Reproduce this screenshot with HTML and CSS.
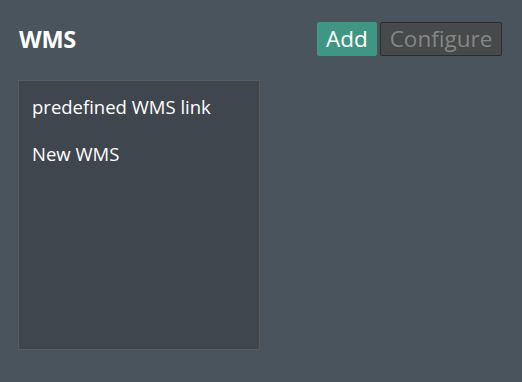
FILE: index.html
```html
<!DOCTYPE html>
<html lang="en">
<head>
<meta charset="utf-8">
<title>WMS</title>
<link rel="stylesheet" href="styles.css">
</head>
<body>
<div class="page">
  <header class="header">
    <h1 class="title">WMS</h1>
    <div class="actions">
      <button class="btn btn-add" type="button">Add</button>
      <button class="btn btn-config" type="button" disabled>Configure</button>
    </div>
  </header>
  <ul class="list">
    <li class="list-item">predefined WMS link</li>
    <li class="list-item">New WMS</li>
  </ul>
</div>
</body>
</html>
```

FILE: styles.css
```css
html, body {
  margin: 0;
  padding: 0;
  background: #4a545c;
  font-family: "Open Sans", "Noto Sans", sans-serif;
  color: #ffffff;
}

.page {
  padding: 22px 20px 0 18px;
}

.header {
  display: flex;
  justify-content: space-between;
  align-items: center;
}

.title {
  margin: 0 0 0 1px;
  font-size: 23.5px;
  font-weight: 700;
  line-height: 28px;
  letter-spacing: -0.3px;
}

.actions {
  display: flex;
  gap: 3px;
}

.btn {
  font-family: inherit;
  font-size: 22.5px;
  line-height: 28px;
  padding: 2px 0;
  border-radius: 2px;
  margin: 0;
  text-align: center;
}

.btn-add {
  background: #3f9682;
  color: #ffffff;
  border: 1px solid #3f9682;
  width: 60px;
}

.btn-config {
  background: #464a4a;
  color: #858585;
  border: 1px solid #2c2c2c;
  width: 122px;
}

.list {
  box-sizing: border-box;
  list-style: none;
  margin: 24px 0 0 0;
  padding: 14px 0 0 13px;
  width: 242px;
  height: 270px;
  background: #3f464d;
  border: 1px solid #5a5a58;
  display: flex;
  flex-direction: column;
  gap: 23px;
}

.list-item {
  font-size: 18.5px;
  line-height: 24px;
}
```
